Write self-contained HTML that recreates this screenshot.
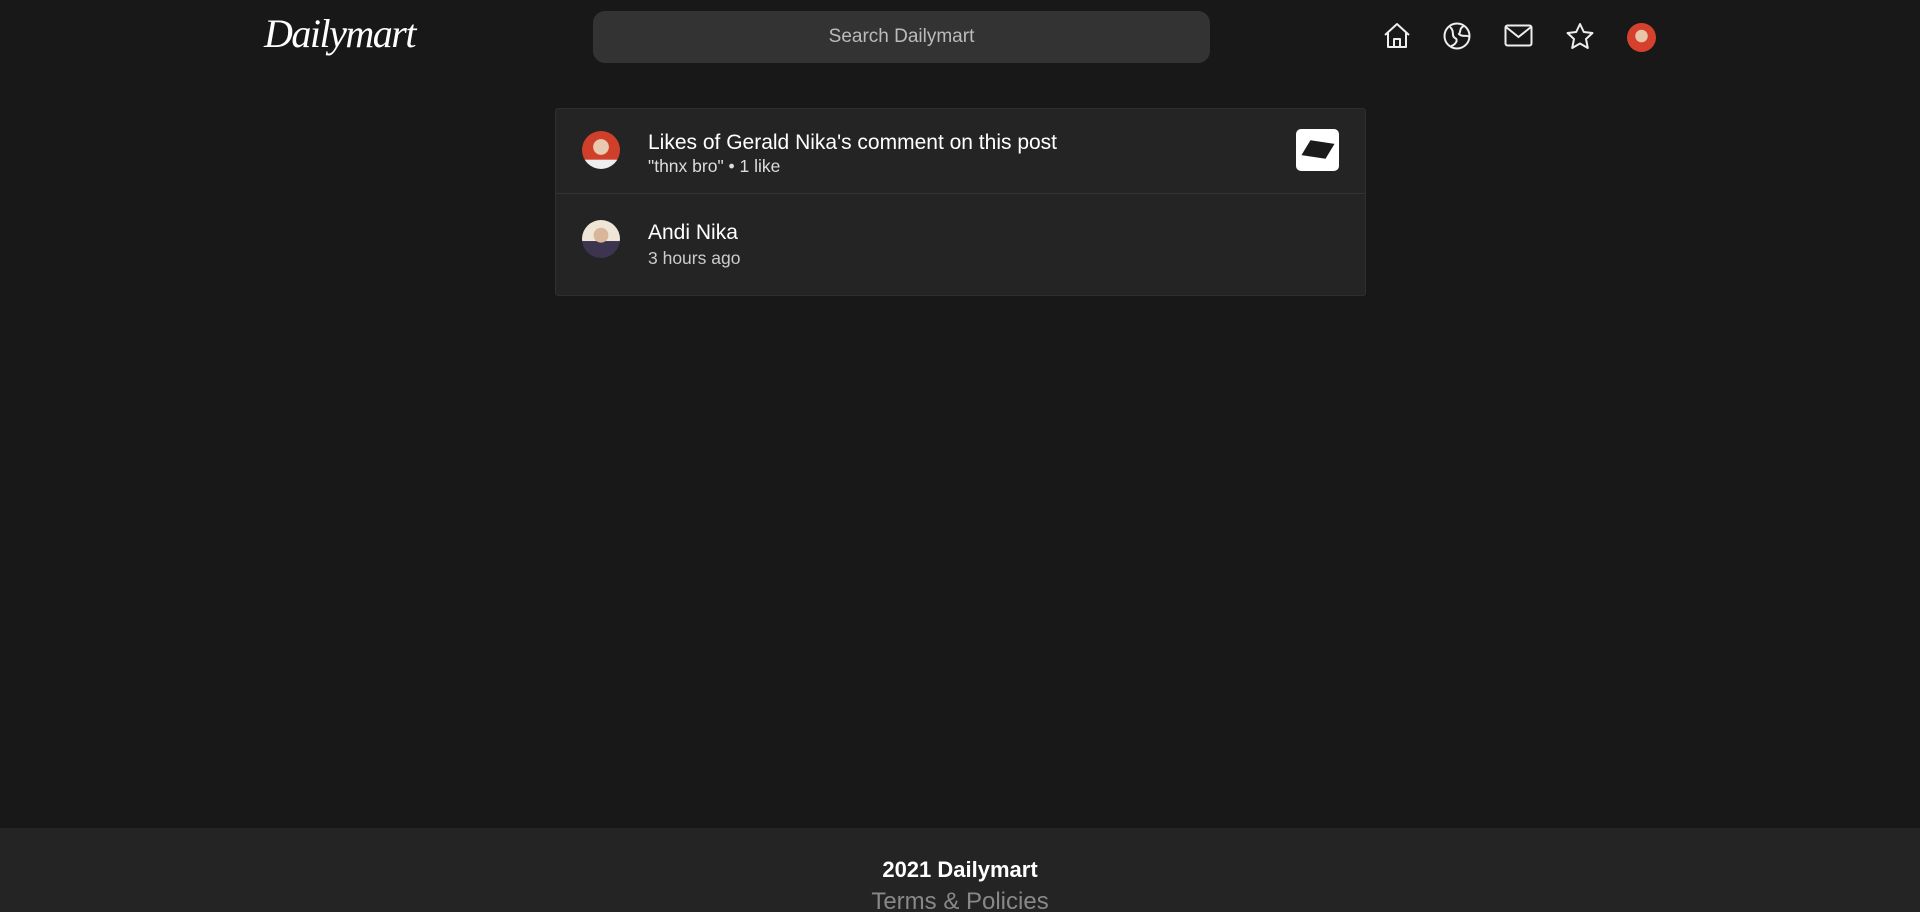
<!DOCTYPE html>
<html><head><meta charset="utf-8"><style>
*{margin:0;padding:0;box-sizing:border-box}
html,body{width:1920px;height:912px;background:#181818;font-family:"Liberation Sans",sans-serif;overflow:hidden;position:relative;color:#fff}
.logo{position:absolute;left:264px;top:10px;font-family:"Liberation Serif",serif;font-style:italic;font-size:40px;color:#fff;letter-spacing:-1.5px}
.search{position:absolute;left:593px;top:11px;width:617px;height:52px;background:#333;border-radius:12px;color:#bbb;font-size:19px;text-align:center;line-height:52px}
.ic{position:absolute;top:22px}
.av{position:absolute;border-radius:50%;overflow:hidden}
.card{position:absolute;left:555px;top:108px;width:811px;height:188px;background:#242424;border:1px solid #2f2f2f;border-radius:3px}
.sep{position:absolute;left:0;right:0;top:84px;height:1px;background:#333}
.t{position:absolute;left:92px;white-space:nowrap}
footer{position:absolute;left:0;top:828px;width:1920px;height:84px;background:#242424;text-align:center}
</style></head><body>
<div class="logo">Dailymart</div>
<div class="search">Search Dailymart</div>
<svg class="ic" style="left:1383px" width="28" height="27" viewBox="0 0 28 27" fill="none" stroke="#eee" stroke-width="2" stroke-linejoin="round"><path d="M2 13 L14 2 L26 13 M5 11 V25 H23 V11 M11 25 V17 H17 V25"/></svg>
<svg class="ic" style="left:1443px" width="28" height="28" viewBox="0 0 28 28" fill="none" stroke="#eee" stroke-width="2"><circle cx="14" cy="14" r="12.5"/><path d="M7 5 C12 9 8 14 12 16 C16 18 12 23 8 24 M21 4 C16 6 18 10 16 12 C20 16 24 12 26 15"/></svg>
<svg class="ic" style="left:1504px;top:24px" width="29" height="23" viewBox="0 0 29 23" fill="none" stroke="#eee" stroke-width="2"><rect x="1.5" y="1.5" width="26" height="20" rx="2"/><path d="M2 3 L14.5 13 L27 3"/></svg>
<svg class="ic" style="left:1565px" width="30" height="28" viewBox="0 0 30 28" fill="none" stroke="#eee" stroke-width="2" stroke-linejoin="round"><path d="M15 2 L18.8 10 L27.5 11 L21 17 L22.8 26 L15 21.5 L7.2 26 L9 17 L2.5 11 L11.2 10 Z"/></svg>
<div class="av" style="left:1627px;top:23px;width:29px;height:29px;background:radial-gradient(circle at 50% 45%,#e8c4a8 0 28%,#d5412c 30%)"></div>
<div class="card">
 <div class="av" style="left:26px;top:22px;width:38px;height:38px;background:radial-gradient(circle at 50% 42%,#e9c9b0 0 26%,transparent 28%),linear-gradient(#cf3f2a 75%,#eee 76%)"></div>
 <div class="t" style="top:22px;font-size:21px">Likes of Gerald Nika's comment on this post</div>
 <div class="t" style="top:47px;font-size:17.5px;color:#ddd">"thnx bro" • 1 like</div>
 <div style="position:absolute;left:740px;top:20px;width:43px;height:42px;background:#fff;border-radius:5px"><div style="position:absolute;left:9px;top:13px;width:26px;height:15px;background:#1a1a1a;transform:skewX(-25deg) rotate(8deg)"></div></div>
 <div class="sep"></div>
 <div class="av" style="left:26px;top:111px;width:38px;height:38px;background:radial-gradient(circle at 50% 40%,#d9b59a 0 24%,transparent 26%),linear-gradient(#efe6d8 55%,#3d3450 56%)"></div>
 <div class="t" style="top:112px;font-size:21px">Andi Nika</div>
 <div class="t" style="top:139px;font-size:17.5px;color:#ccc">3 hours ago</div>
</div>
<footer>
 <div style="padding-top:30px;font-size:22px;font-weight:bold;color:#fff;line-height:24px">2021 Dailymart</div>
 <div style="font-size:24px;color:#888;line-height:28px;margin-top:6px">Terms &amp; Policies</div>
</footer>
</body></html>
